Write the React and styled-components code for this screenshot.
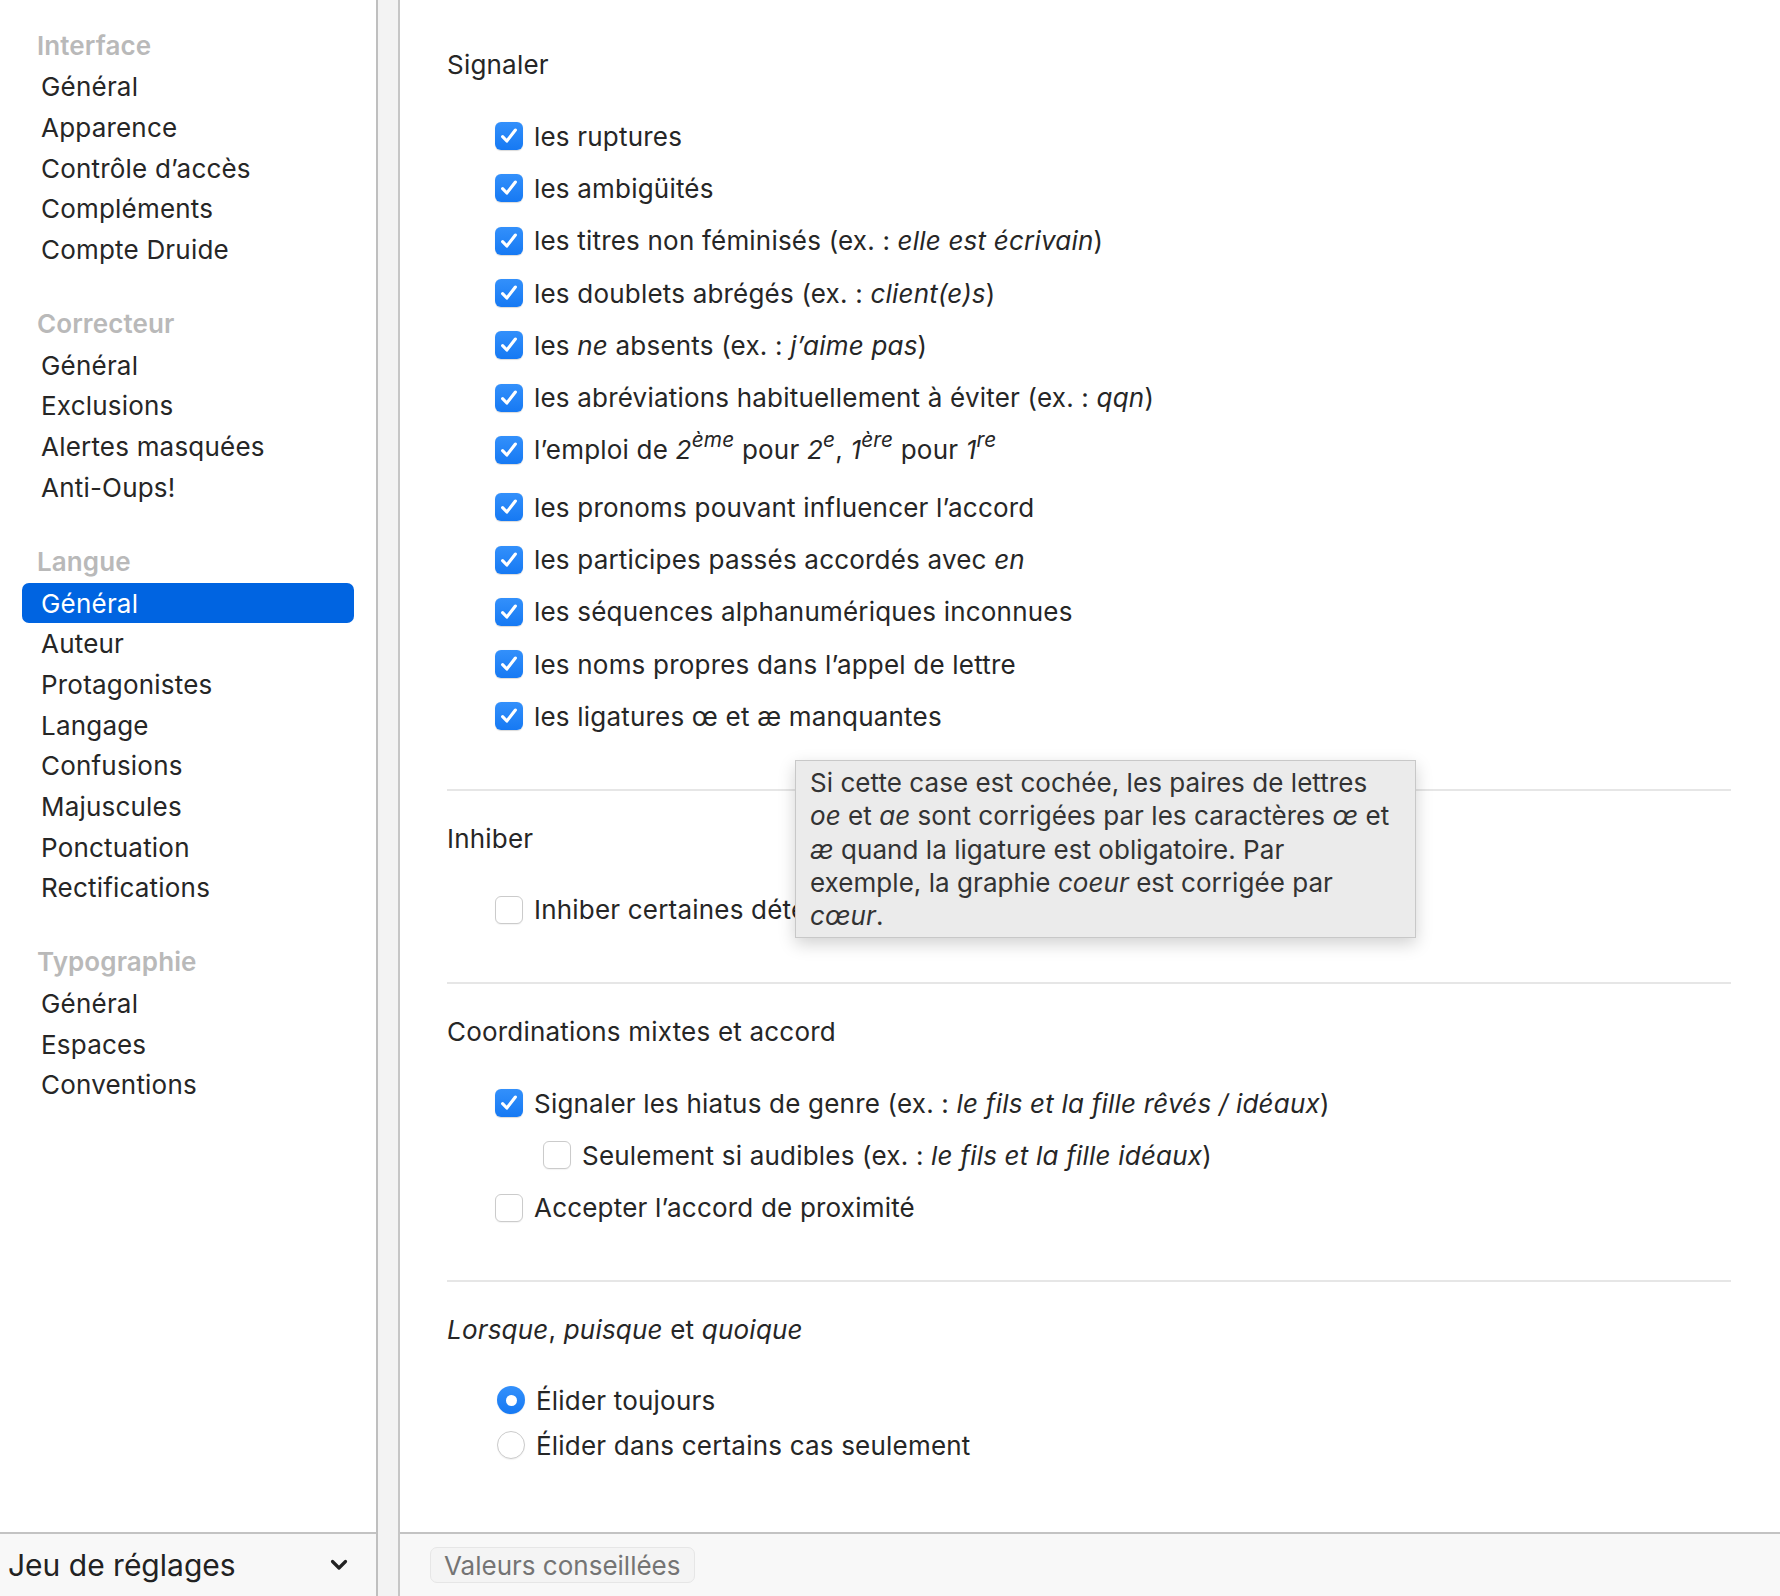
import React from "react";
import styled, { createGlobalStyle } from "styled-components";

const Global = createGlobalStyle`
  html, body { margin: 0; padding: 0; background: #fff; }
  body { font-family: "Inter", "Noto Sans", sans-serif; color: #262626; -webkit-font-smoothing: antialiased; }
  * { box-sizing: border-box; }
`;

const Shell = styled.div`
  display: flex;
  width: 100%;
  height: 100vh;
  overflow: hidden;
`;

const Sidebar = styled.aside`
  width: 376px;
  flex: none;
  display: flex;
  flex-direction: column;
  background: #fff;
`;

const SidebarList = styled.nav`
  flex: 1;
  padding-top: 23.5px;
`;

const Group = styled.div`
  margin-bottom: 32px;
`;

const GroupHeader = styled.div`
  height: 43px;
  line-height: 43px;
  padding-left: 37px;
  font-size: 26px;
  letter-spacing: 0.1px;
  font-weight: 600;
  color: #b9b9b9;
`;

const NavItem = styled.div`
  height: 40.7px;
  margin: 0 22px;
  padding-left: 19px;
  display: flex;
  align-items: center;
  border-radius: 7px;
  font-size: 26px;
  letter-spacing: 0.2px;
  color: ${(p) => (p.$active ? "#fff" : "#262626")};
  background: ${(p) => (p.$active ? "#0064e1" : "transparent")};
`;

const BottomBar = styled.div`
  height: 64px;
  flex: none;
  border-top: 2px solid #c3c3c3;
  background: #f8f8f8;
  display: flex;
  align-items: center;
`;

const PresetBar = styled(BottomBar)`
  justify-content: space-between;
  padding: 0 28px 0 8px;
`;

const PresetLabel = styled.span`
  font-size: 30px;
  color: #222;
`;

const Divider = styled.div`
  width: 24px;
  flex: none;
  background: #f3f3f3;
  border-left: 2px solid #bfbfbf;
  border-right: 2px solid #c6c6c6;
`;

const Main = styled.main`
  flex: 1;
  display: flex;
  flex-direction: column;
  min-width: 0;
`;

const Content = styled.div`
  flex: 1;
  position: relative;
  padding: 45px 49px 0 47px;
`;

const Section = styled.section`
  padding: ${(p) => (p.$first ? "0" : "28px")} 0 ${(p) => (p.$last ? "0" : "46px")};
  border-bottom: ${(p) => (p.$last ? "none" : "2px solid #e6e6e6")};
`;

const SectionTitle = styled.div`
  height: 40px;
  line-height: 40px;
  margin-bottom: 25px;
  font-size: 26px;
  letter-spacing: 0.2px;
  color: #262626;
`;

const Row = styled.label`
  display: flex;
  align-items: center;
  gap: 11px;
  height: ${(p) => (p.$tall ? "57.3px" : "52.3px")};
  padding-left: ${(p) => (p.$indent ? "96px" : "48px")};
  padding-bottom: ${(p) => (p.$tall ? "5px" : "0")};
  font-size: 26px;
  letter-spacing: 0.2px;
  color: #262626;
  white-space: nowrap;

  sup {
    font-size: 0.8em;
    line-height: 0;
    vertical-align: 0.6em;
  }
`;

const RadioGroup = styled.div`
  padding-top: 3px;
`;

const RadioRow = styled(Row)`
  height: 45px;
  padding-left: 50px;
`;

const Box = styled.span`
  width: 28px;
  height: 28px;
  flex: none;
  border-radius: 6px;
  display: inline-flex;
  align-items: center;
  justify-content: center;
  background: ${(p) =>
    p.$checked ? "linear-gradient(180deg, #3390fb 0%, #1679f3 100%)" : "#fff"};
  border: ${(p) => (p.$checked ? "none" : "1px solid #cbcbcb")};
  box-shadow: ${(p) =>
    p.$checked ? "0 0.5px 1px rgba(0,0,0,0.15)" : "0 1px 1px rgba(0,0,0,0.05)"};
`;

const RadioDot = styled(Box)`
  border-radius: 50%;
  &::after {
    content: "";
    display: ${(p) => (p.$checked ? "block" : "none")};
    width: 11px;
    height: 11px;
    border-radius: 50%;
    background: #fff;
  }
`;

const Tooltip = styled.div`
  position: absolute;
  left: 395px;
  top: 760px;
  width: 621px;
  height: 178px;
  padding: 5px 14px;
  background: #ebebeb;
  border: 1px solid #c8c8c8;
  box-shadow: 0 6px 16px rgba(0, 0, 0, 0.18);
  font-size: 26px;
  letter-spacing: 0.05px;
  line-height: 33.3px;
  color: #333;
  white-space: nowrap;
`;

const ActionBar = styled(BottomBar)`
  padding-left: 30px;
`;

const GhostButton = styled.button`
  height: 36px;
  padding: 0 13px;
  border: 1px solid #e6e6e6;
  border-radius: 7px;
  background: #f4f4f4;
  font-family: inherit;
  font-size: 26px;
  color: #747474;
`;

const Check = ({ checked }) => (
  <Box $checked={checked}>
    {checked && (
      <svg width="22" height="22" viewBox="0 0 20 20">
        <path d="M4.2 10.6 L8 14.6 L15.8 4.6" fill="none" stroke="#fff" strokeWidth="2.8" strokeLinecap="round" strokeLinejoin="round" />
      </svg>
    )}
  </Box>
);

const Chevron = () => (
  <svg width="18" height="12" viewBox="0 0 18 12">
    <path d="M2.5 2.5 L9 9 L15.5 2.5" fill="none" stroke="#222" strokeWidth="3.2" strokeLinecap="round" strokeLinejoin="round" />
  </svg>
);

const groups = [
  { title: "Interface", items: ["Général", "Apparence", "Contrôle d’accès", "Compléments", "Compte Druide"] },
  { title: "Correcteur", items: ["Général", "Exclusions", "Alertes masquées", "Anti-Oups!"] },
  {
    title: "Langue",
    items: ["Général", "Auteur", "Protagonistes", "Langage", "Confusions", "Majuscules", "Ponctuation", "Rectifications"],
    active: 0,
  },
  { title: "Typographie", items: ["Général", "Espaces", "Conventions"] },
];

const signaler = [
  <>les ruptures</>,
  <>les ambigüités</>,
  <>les titres non féminisés (ex. : <i>elle est écrivain</i>)</>,
  <>les doublets abrégés (ex. : <i>client(e)s</i>)</>,
  <>les <i>ne</i> absents (ex. : <i>j’aime pas</i>)</>,
  <>les abréviations habituellement à éviter (ex. : <i>qqn</i>)</>,
  <>l’emploi de <i>2<sup>ème</sup></i> pour <i>2<sup>e</sup></i>, <i>1<sup>ère</sup></i> pour <i>1<sup>re</sup></i></>,
  <>les pronoms pouvant influencer l’accord</>,
  <>les participes passés accordés avec <i>en</i></>,
  <>les séquences alphanumériques inconnues</>,
  <>les noms propres dans l’appel de lettre</>,
  <>les ligatures œ et æ manquantes</>,
];

export default function App() {
  return (
    <>
      <Global />
      <Shell>
        <Sidebar>
          <SidebarList>
            {groups.map((g) => (
              <Group key={g.title}>
                <GroupHeader>{g.title}</GroupHeader>
                {g.items.map((it, i) => (
                  <NavItem key={it + i} $active={g.active === i}>
                    {it}
                  </NavItem>
                ))}
              </Group>
            ))}
          </SidebarList>
          <PresetBar>
            <PresetLabel>Jeu de réglages</PresetLabel>
            <Chevron />
          </PresetBar>
        </Sidebar>
        <Divider />
        <Main>
          <Content>
            <Section $first>
              <SectionTitle>Signaler</SectionTitle>
              {signaler.map((txt, i) => (
                <Row key={i} $tall={i === 6}>
                  <Check checked />
                  <span>{txt}</span>
                </Row>
              ))}
            </Section>
            <Section>
              <SectionTitle>Inhiber</SectionTitle>
              <Row>
                <Check checked={false} />
                <span>Inhiber certaines détections</span>
              </Row>
            </Section>
            <Section>
              <SectionTitle>Coordinations mixtes et accord</SectionTitle>
              <Row>
                <Check checked />
                <span>
                  Signaler les hiatus de genre (ex. : <i>le fils et la fille rêvés / idéaux</i>)
                </span>
              </Row>
              <Row $indent>
                <Check checked={false} />
                <span>
                  Seulement si audibles (ex. : <i>le fils et la fille idéaux</i>)
                </span>
              </Row>
              <Row>
                <Check checked={false} />
                <span>Accepter l’accord de proximité</span>
              </Row>
            </Section>
            <Section $last>
              <SectionTitle>
                <i>Lorsque</i>, <i>puisque</i> et <i>quoique</i>
              </SectionTitle>
              <RadioGroup>
                <RadioRow>
                  <RadioDot $checked />
                  <span>Élider toujours</span>
                </RadioRow>
                <RadioRow>
                  <RadioDot />
                  <span>Élider dans certains cas seulement</span>
                </RadioRow>
              </RadioGroup>
            </Section>
            <Tooltip>
              Si cette case est cochée, les paires de lettres
              <br />
              <i>oe</i> et <i>ae</i> sont corrigées par les caractères <i>œ</i> et
              <br />
              <i>æ</i> quand la ligature est obligatoire. Par
              <br />
              exemple, la graphie <i>coeur</i> est corrigée par
              <br />
              <i>cœur</i>.
            </Tooltip>
          </Content>
          <ActionBar>
            <GhostButton>Valeurs conseillées</GhostButton>
          </ActionBar>
        </Main>
      </Shell>
    </>
  );
}
